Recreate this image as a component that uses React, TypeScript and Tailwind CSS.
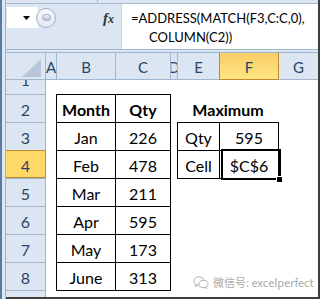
import React from "react";

const rows: [string, string][] = [
  ["Jan", "226"],
  ["Feb", "478"],
  ["Mar", "211"],
  ["Apr", "595"],
  ["May", "173"],
  ["June", "313"],
];

export default function App() {
  return (
    <div className="relative flex w-[320px] h-[299px] overflow-hidden bg-[#dce6f2] font-['Lato',sans-serif]">
      {/* left strip */}
      <div className="w-[6px] h-full shrink-0 border-l-2 border-l-[#5a7ca3] border-r border-r-[#9eb6ce] bg-[#dce6f2]" />

      <div className="w-[312px] shrink-0 flex flex-col">
        {/* top strip */}
        <div className="h-[3px] flex">
          <div className="ml-[91px] w-px bg-[#a9bcd2]" />
        </div>

        {/* formula bar */}
        <div className="h-[46px] border-t border-[#a5b9d1] flex">
          <div className="w-[115px] shrink-0 flex flex-col pt-[3px]">
            <div className="h-[21px] flex items-center">
              <div className="ml-[1px] w-[31px] shrink-0 h-full bg-white flex items-center pl-[16px]">
                <svg width="7" height="4" viewBox="0 0 7 4">
                  <polygon points="0,0 7,0 3.5,4" fill="#000" />
                </svg>
              </div>
              <div className="shrink-0 w-[20px] h-[20px] -ml-[2px] rounded-full bg-gradient-to-b from-[#f7f9fc] to-[#e3eaf3] border border-[#9fb1c7] flex items-center justify-center">
                <div className="w-[9px] h-[7px] rounded-full bg-gradient-to-b from-[#f3f4f6] to-[#b5bfcb] border border-[#9ba7b6]" />
              </div>
              <div className="ml-[47px] shrink-0 text-[15px] leading-none italic font-bold font-['Liberation_Serif',serif] text-[#333] pt-[1px]">
                f<span className="text-[12px]">x</span>
              </div>
            </div>
          </div>
          <div className="flex-1 bg-white border-l border-[#c4d2e2] pt-[5px] pl-[9px] text-[13px] leading-[19px] text-black">
            <div>=ADDRESS(MATCH(F3,C:C,0),</div>
            <div className="pl-[18px]">COLUMN(C2))</div>
          </div>
        </div>

        {/* separator */}
        <div className="h-[3px] border-t border-[#9eb6ce]" />

        {/* sheet */}
        <div className="grid grid-cols-[40px_10px_59px_55px_7px_42px_59px_40px] grid-rows-[28px_14px_28px_28px_28px_28px_28px_28px_28px_7px]">
          {/* header row */}
          <div className="col-start-1 row-start-1 bg-[#dce6f2] border-t border-b border-r border-[#9eb6ce] flex items-end justify-end pr-[4px] pb-[2px]">
            <svg width="19" height="18" viewBox="0 0 19 18">
              <polygon points="19,0 19,18 0,18" fill="#b8c6d7" />
            </svg>
          </div>
          <div className="col-start-2 row-start-1 bg-[#dce6f2] border-t border-b border-[#9eb6ce] text-[15px] text-[#2b4466] flex items-center justify-center overflow-hidden pt-[2px]">A</div>
          <div className="col-start-3 row-start-1 bg-[#dce6f2] border-t border-b border-l border-[#9eb6ce] text-[15px] text-[#2b4466] flex items-center justify-center overflow-hidden pt-[2px]">B</div>
          <div className="col-start-4 row-start-1 bg-[#dce6f2] border-t border-b border-l border-[#9eb6ce] text-[15px] text-[#2b4466] flex items-center justify-center overflow-hidden pt-[2px]">C</div>
          <div className="col-start-5 row-start-1 bg-[#dce6f2] border-t border-b border-l border-[#9eb6ce] text-[15px] text-[#2b4466] flex items-center justify-center overflow-hidden pt-[2px]">D</div>
          <div className="col-start-6 row-start-1 bg-[#dce6f2] border-t border-b border-l border-[#9eb6ce] text-[15px] text-[#2b4466] flex items-center justify-center overflow-hidden pt-[2px]">E</div>
          <div className="col-start-7 row-start-1 bg-gradient-to-b from-[#f8cd66] to-[#ffe682] border-t border-t-[#9eb6ce] border-b border-l border-b-[#c2892f] border-l-[#c2892f] text-[15px] text-[#2b4466] flex items-center justify-center overflow-hidden pt-[2px]">F</div>
          <div className="col-start-8 row-start-1 bg-[#dce6f2] border-t border-b border-l border-t-[#9eb6ce] border-b-[#9eb6ce] border-l-[#c2892f] text-[15px] text-[#2b4466] flex items-center justify-center overflow-hidden pt-[2px]">G</div>

          {/* row headers */}
          <div className="col-start-1 row-start-2 bg-[#dce6f2] border-r border-[#9eb6ce] text-[16px] leading-none text-[#2b4466] flex items-start justify-center overflow-hidden">
            <span className="-mt-[8px]">1</span>
          </div>
          {[2, 3, 4, 5, 6, 7, 8].map((n) => (
            <div
              key={n}
              className={
                n === 4
                  ? "col-start-1 bg-[#ffd967] border-t border-b border-r border-[#c2892f] text-[16px] leading-none text-[#2b4466] flex items-center justify-center pt-[3px]"
                  : "col-start-1 bg-[#dce6f2] border-t border-r border-[#9eb6ce] text-[16px] leading-none text-[#2b4466] flex items-center justify-center pt-[3px]"
              }
              style={{ gridRowStart: n + 1 }}
            >
              {n}
            </div>
          ))}
          <div className="col-start-1 row-start-10 bg-[#dce6f2] border-t border-r border-[#9eb6ce]" />

          {/* white data area */}
          <div className="col-start-2 col-end-9 row-start-2 row-end-11 bg-white" />

          {/* Month / Qty table */}
          <div className="col-start-3 col-span-2 row-start-3 row-span-7 self-start justify-self-start w-[115px] h-[197px] grid grid-cols-[59px_56px] grid-rows-[28px_28px_28px_28px_28px_28px_29px] text-[16px] leading-none text-black">
            <div className="border-l border-t border-black flex items-center justify-center pt-[3px] font-bold">Month</div>
            <div className="border-l border-t border-r border-black flex items-center justify-center pt-[3px] font-bold">Qty</div>
            {rows.map(([m, q], i) => (
              <React.Fragment key={m}>
                <div
                  className={
                    i === rows.length - 1
                      ? "border-l border-t border-b border-black flex items-center justify-center pt-[3px]"
                      : "border-l border-t border-black flex items-center justify-center pt-[3px]"
                  }
                >
                  {m}
                </div>
                <div
                  className={
                    i === rows.length - 1
                      ? "border-l border-t border-r border-b border-black flex items-center justify-center pt-[3px]"
                      : "border-l border-t border-r border-black flex items-center justify-center pt-[3px]"
                  }
                >
                  {q}
                </div>
              </React.Fragment>
            ))}
          </div>

          {/* Maximum */}
          <div className="col-start-6 col-span-2 row-start-3 flex items-center justify-center pt-[3px] pl-[1px] text-[16px] leading-none font-bold text-black">
            Maximum
          </div>

          {/* Qty / Cell table */}
          <div className="col-start-6 col-span-2 row-start-4 row-span-2 self-start justify-self-start w-[102px] h-[57px] grid grid-cols-[42px_60px] grid-rows-[28px_29px] text-[16px] leading-none text-black">
            <div className="border-l border-t border-black flex items-center justify-center pt-[3px]">Qty</div>
            <div className="border-l border-t border-r border-black flex items-center justify-center pt-[3px]">595</div>
            <div className="border-l border-t border-b border-black flex items-center justify-center pt-[3px]">Cell</div>
            <div className="relative border-l border-t border-r border-b border-black flex items-center justify-center pt-[3px]">
              $C$6
              <div className="absolute left-[1px] -top-[2px] w-[60px] h-[31px] border-2 border-black" />
              <div className="absolute left-[56px] top-[25px] w-[7px] h-[7px] bg-black border border-white" />
            </div>
          </div>
        </div>

        {/* bottom border */}
        <div className="h-[2px] bg-[#3e3e3e]" />
      </div>

      {/* right strip */}
      <div className="w-[2px] h-full shrink-0 bg-[#3e3e3e]" />

      {/* watermark */}
      <div className="absolute left-[193px] top-[276px] flex items-center gap-[4px] text-[11px] leading-none text-[#a8a8a8] font-['Noto_Sans_CJK_SC',sans-serif]">
        <svg width="16" height="13" viewBox="0 0 16 13" fill="none" stroke="#b5b5b5" strokeWidth="1">
          <ellipse cx="6" cy="5" rx="5.2" ry="4.2" />
          <path d="M3 8.5 L2.2 10.5 L5 9.1" />
          <ellipse cx="10.5" cy="8" rx="4.5" ry="3.6" fill="#fff" />
          <path d="M13 11 L13.8 12.6 L11.5 11.6" />
        </svg>
        <span>微信号: excelperfect</span>
      </div>
    </div>
  );
}
